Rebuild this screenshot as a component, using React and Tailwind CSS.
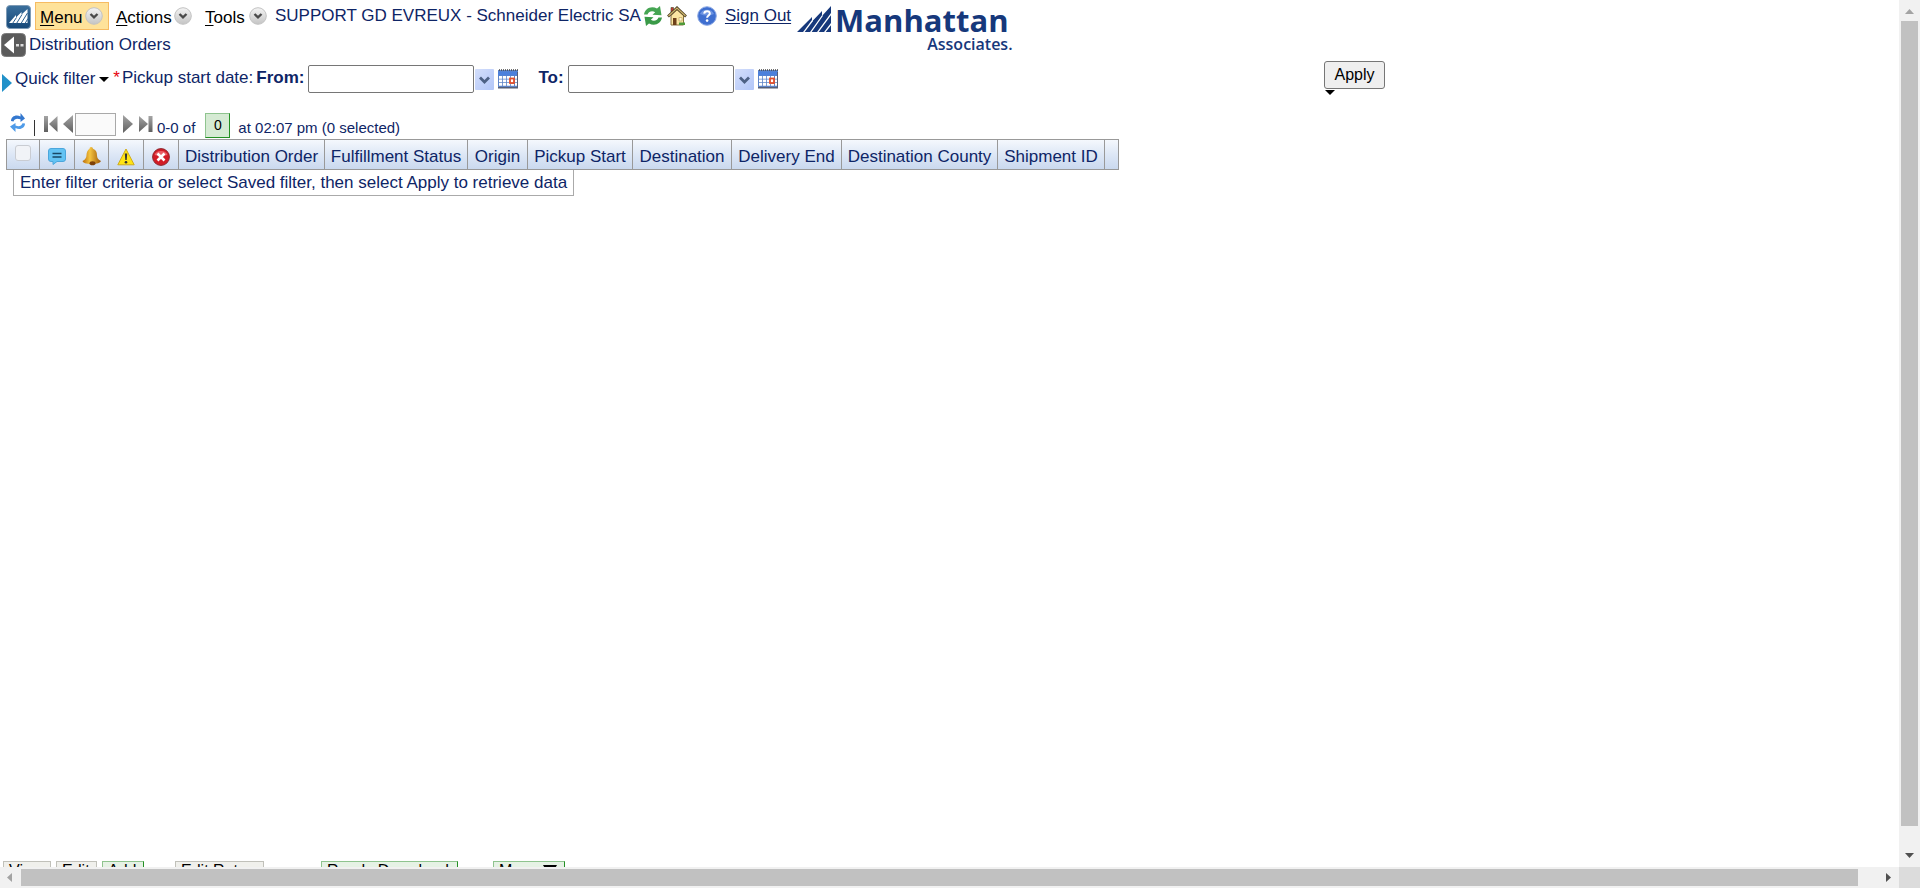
import React from "react";

const MenuChevron = () => (
  <svg width="18" height="18" viewBox="0 0 18 18" aria-hidden="true">
    <defs>
      <linearGradient id="chev" x1="0" y1="0" x2="0" y2="1">
        <stop offset="0" stopColor="#f4f4f4" />
        <stop offset="1" stopColor="#c4c4c4" />
      </linearGradient>
    </defs>
    <circle cx="9" cy="9" r="8.3" fill="url(#chev)" stroke="#c2c2c2" />
    <path d="M5.500 7 9 10.300l3.500-3.300" fill="none" stroke="#4a4a4a" strokeWidth="2.400" />
  </svg>
);

const AppMark = () => (
  <svg width="25" height="24" viewBox="0 0 25 24" aria-hidden="true">
    <defs>
      <linearGradient id="mark" x1="0" y1="0" x2="0" y2="1">
        <stop offset="0" stopColor="#3a6f9c" />
        <stop offset="1" stopColor="#164878" />
      </linearGradient>
    </defs>
    <rect x=".5" y=".5" width="24" height="23" rx="3.500" fill="url(#mark)" stroke="#7d9ab5" />
    <path d="M3 18 10 10v2.500L15.500 7v2.500L21.500 4v14z" fill="#fff" />
    <path d="M6.500 18.500 10.500 12.500M10.500 18.500 16 9.500M15 18.500 21.500 8M19 18.500l3-5" stroke="#2a5f8f" strokeWidth="1" />
  </svg>
);

const BackIcon = () => (
  <svg width="25" height="24" viewBox="0 0 25 24" aria-hidden="true">
    <rect x=".5" y=".5" width="24" height="23" rx="4" fill="#5b5b5b" stroke="#7c7c7c" />
    <path d="M3 12 13 3.500v17z" fill="#fff" />
    <path d="M15 11h3v2.500h-3zM19.500 11h3v2.500h-3z" fill="#ddd" />
  </svg>
);

const RefreshGreen = () => (
  <svg width="20" height="20" viewBox="0 0 20 20" aria-hidden="true">
    <path d="M1 8.500C2 2.500 8-.5 14 2.500L17 0l1.500 9.200-9-.4 2.700-2.600C9.500 4.500 6 5 4.500 8.500z" fill="#45a553" />
    <path d="M19 11.500C18 17.500 12 20.500 6 17.500L3 20l-1.500-9.200 9 .4-2.700 2.600c2.700 1.700 6.200 1.200 7.700-2.300z" fill="#3a9a48" />
  </svg>
);

const HomeIcon = () => (
  <svg width="20" height="20" viewBox="0 0 20 20" aria-hidden="true">
    <path d="M4 1.500h2.500V6H4z" fill="#c33" stroke="#553" strokeWidth=".7" />
    <path d="M4 9.500V19h12.500V9.500L10 4z" fill="#fbe6a2" stroke="#8a7340" />
    <path d="M1 10.500 10 1.800l9 8.700" fill="none" stroke="#4a3b20" strokeWidth="2.600" />
    <path d="M1.500 10 10 2l8.500 8" fill="none" stroke="#cdb56b" strokeWidth="1.200" />
    <path d="M6 12h3.500v7H6z" fill="#6d401a" />
    <path d="M12 11.500h3V15h-3z" fill="#fff4cf" stroke="#b89a55" strokeWidth=".6" />
    <path d="M12 19h6v-2.500h-6z" fill="#4f9a3b" />
  </svg>
);

const HelpIcon = () => (
  <svg width="20" height="20" viewBox="0 0 20 20" aria-hidden="true">
    <circle cx="10" cy="10" r="9.300" fill="#3f6fd0" stroke="#8eaae4" />
    <path d="M3 8a7.300 6 0 0 1 14 0q-7 3-14 0z" fill="#6d94e2" />
    <path d="M7.200 7.600c.2-3.300 5.800-3.200 5.600 0-.1 1.900-2.700 2-2.700 4.200" fill="none" stroke="#fff" strokeWidth="2" />
    <circle cx="10.100" cy="14.600" r="1.300" fill="#fff" />
  </svg>
);

const Bars = () => (
  <svg width="34" height="26" viewBox="0 0 34 26" aria-hidden="true">
    <path d="M0 26 15 11v4.500L25 5v5L34 0v26z" fill="#16387b" />
    <path d="M6.500 26.500 15.500 14.500M13.500 26.500 25.500 9.500M20.500 26.500 34.500 7.500M27.500 26.500l7-9" stroke="#fff" strokeWidth="1.300" />
  </svg>
);

const DropIcon = () => (
  <svg width="19" height="21" viewBox="0 0 19 21" aria-hidden="true">
    <defs>
      <linearGradient id="drop" x1="0" y1="0" x2="1" y2="1">
        <stop offset="0" stopColor="#d3defb" />
        <stop offset="1" stopColor="#b2c6f8" />
      </linearGradient>
    </defs>
    <rect width="19" height="21" rx="1" fill="url(#drop)" />
    <path d="M5 8.500 9.500 13 14 8.500" fill="none" stroke="#4d6185" strokeWidth="2.800" />
  </svg>
);

const CalendarIcon = () => (
  <svg width="20" height="20" viewBox="0 0 20 20" aria-hidden="true">
    <path d="M0 1h20v18H0z" fill="#5d84c8" />
    <path d="M0 2.500h20v4H0z" fill="#4b80dc" />
    <path d="M0 18h20v1.500H0zM19 3h1v16h-1z" fill="#555f78" />
    <path d="M1 1h19" stroke="#444" strokeWidth="1.600" strokeDasharray="1 1" />
    <path d="M1 7h3.200v2.700H1zM5 7h3.200v2.700H5zM9 7h3.200v2.700H9zM13 7h3v2.700h-3zM17 7h2v2.700h-2zM1 10.500h3.200v2.700H1zM5 10.500h3.200v2.700H5zM9 10.500h3.200v2.700H9zM17 10.500h2v2.700h-2zM1 14h3.200v2.700H1zM5 14h3.200v2.700H5zM9 14h3.200v2.700H9zM13 15h3v1.700h-3zM17 14h2v2.700h-2z" fill="#fff" />
    <rect x="12" y="9.500" width="4" height="4.500" fill="#fff" stroke="#e2502c" strokeWidth="1.800" />
  </svg>
);

const BlueRefresh = () => (
  <svg width="16" height="20" viewBox="0 0 16 20" aria-hidden="true">
    <path d="M1 8C1 3.500 6 1 10.500 3.500V0L15 5.500 10.500 9V6.300C7 5 4.500 5.500 3.500 8.500z" fill="#3478cf" />
    <path d="M15 10.500c0 4.500-5 7-9.500 4.500V19L0 13.500 5.500 10v2.600c3.500 1.300 6 .5 7-2.400z" fill="#4f9be8" />
  </svg>
);

const FirstIcon = () => (
  <svg width="14" height="16" viewBox="0 0 14 16" aria-hidden="true">
    <defs>
      <linearGradient id="nav" x1="0" y1="0" x2="0" y2="1">
        <stop offset="0" stopColor="#a5a5a5" />
        <stop offset="1" stopColor="#5f5f5f" />
      </linearGradient>
    </defs>
    <path d="M0 0h4v16H0zM13.500 0v16L5 8z" fill="url(#nav)" />
  </svg>
);
const PrevIcon = () => (
  <svg width="10" height="18" viewBox="0 0 10 18" aria-hidden="true"><path d="M10 0v18L0 9z" fill="url(#nav)" /></svg>
);
const NextIcon = () => (
  <svg width="10" height="18" viewBox="0 0 10 18" aria-hidden="true"><path d="M0 0v18l10-9z" fill="url(#nav)" /></svg>
);
const LastIcon = () => (
  <svg width="14" height="16" viewBox="0 0 14 16" aria-hidden="true"><path d="M9.500 0h4v16h-4zM0 0v16l9-8z" fill="url(#nav)" /></svg>
);

const NoteIcon = () => (
  <svg width="18" height="17" viewBox="0 0 18 17" aria-hidden="true">
    <path d="M3 .5h12q2.500 0 2.500 2.500v8q0 2.500-2.500 2.500H9L5 16.500v-3H3Q.5 13.500.5 11V3Q.5.500 3 .5z" fill="#63c3f3" stroke="#4ba6dc" />
    <path d="M4.500 5.500h9M4.500 9h9" stroke="#184866" strokeWidth="1.500" />
  </svg>
);
const BellIcon = () => (
  <svg width="20" height="19" viewBox="0 0 20 19" aria-hidden="true">
    <defs>
      <linearGradient id="bell" x1="0" y1="0" x2="1" y2="0">
        <stop offset="0" stopColor="#b96d0c" />
        <stop offset=".4" stopColor="#f5c440" />
        <stop offset="1" stopColor="#9c5606" />
      </linearGradient>
    </defs>
    <path d="M9 0q2 0 2 1.700Q15 3 15 8.500q0 3.500 4 5.500-1 3-9.500 3T.5 14q4-2 4-6T7.500 1.700Q7.500 0 9 0z" fill="url(#bell)" />
    <ellipse cx="10.500" cy="16.300" rx="3" ry="2" fill="#7e420a" />
  </svg>
);
const WarnIcon = () => (
  <svg width="18" height="18" viewBox="0 0 18 18" aria-hidden="true">
    <path d="M9 1 17.200 16.800H.8z" fill="#ffe414" stroke="#cfaa1c" strokeLinejoin="round" />
    <path d="M7.800 5.500h2.400L9.700 12H8.300z" fill="#333" />
    <circle cx="9" cy="14.200" r="1.300" fill="#333" />
  </svg>
);
const ErrorIcon = () => (
  <svg width="18" height="18" viewBox="0 0 18 18" aria-hidden="true">
    <circle cx="9" cy="9" r="8.400" fill="#d21c26" stroke="#8e2a30" />
    <path d="M2.500 7a6.800 5.500 0 0 1 13 0q-6.500 2-13 0z" fill="#ea6067" />
    <path d="m5.500 5.500 7 7M12.500 5.500l-7 7" stroke="#fff" strokeWidth="2.600" />
  </svg>
);

const Caret = () => (
  <svg width="10" height="5" viewBox="0 0 10 5" className="block" aria-hidden="true"><path d="M0 0h10L5 5z" fill="#000" /></svg>
);

const MoreArrow = () => (
  <svg width="14" height="12" viewBox="0 0 14 12" className="mt-[3px]" aria-hidden="true"><path d="M0 0h14L7 12z" fill="#000" /></svg>
);

const menus = [
  { key: "M", rest: "enu", style: "border-[#f6bb62] bg-[#fee29a] w-[74px]" },
  { key: "A", rest: "ctions", style: "border-transparent w-[87px] ml-0.5" },
  { key: "T", rest: "ools", style: "border-transparent w-[73px] ml-0.5" },
];

const columns = [
  ["Distribution Order", "w-[146px]"],
  ["Fulfillment Status", "w-[143px]"],
  ["Origin", "w-[60px]"],
  ["Pickup Start", "w-[105px]"],
  ["Destination", "w-[99px]"],
  ["Delivery End", "w-[110px]"],
  ["Destination County", "w-[156px]"],
  ["Shipment ID", "w-[107px]"],
];

const iconColumns = [
  ["Notes", NoteIcon, "w-[35px]"],
  ["Alerts", BellIcon, "w-[34px]"],
  ["Warnings", WarnIcon, "w-[35px]"],
  ["Errors", ErrorIcon, "w-[35px]"],
];

const actions = [
  ["View", "ml-[3px] w-12", false],
  ["Edit", "ml-[5px] w-[41px]", false],
  ["Add", "ml-[5px] w-[42px]", true],
  ["Edit Rates", "ml-[31px] w-[89px]", false],
  ["Ready Download", "ml-[57px] w-[137px]", true],
  ["More", "ml-[35px] w-[72px]", true, MoreArrow],
];

const DateField = ({ id, label, gap }) => (
  <>
    <label htmlFor={id} className={`pb-0.5 font-bold ${gap}`}>{label}</label>
    <input id={id} type="text" className="ml-1 h-7 w-[166px] rounded-[2px] border border-[#767676] bg-white px-1 text-black" />
    <button type="button" aria-label={`${label} date options`} className="ml-px"><DropIcon /></button>
    <button type="button" aria-label={`${label} calendar`} className="ml-1"><CalendarIcon /></button>
  </>
);

const cell = "border-t border-b border-l border-[#999] p-0 align-middle font-normal";

export default function App() {
  return (
    <div className="grid h-screen grid-cols-[minmax(0,1fr)_21px] grid-rows-[minmax(0,1fr)_21px] overflow-hidden bg-white font-['Liberation_Sans',Arial,sans-serif] text-[17px] leading-6 text-[#0e2566]">
      <div className="flex min-h-0 flex-col overflow-hidden whitespace-nowrap">
        <header className="flex h-[33px] items-start">
          <span className="mt-[5px] ml-1.5"><AppMark /></span>
          <nav className="ml-1 mt-0.5 flex">
            {menus.map((m) => (
              <button key={m.key} type="button" className={`flex h-7 items-center justify-between border pr-[5px] pl-1 text-black ${m.style}`}>
                <span className="pt-1"><u className="underline-offset-2">{m.key}</u>{m.rest}</span>
                <MenuChevron />
              </button>
            ))}
          </nav>
          <div className="ml-0.5 flex h-[31px] items-center">
            <span>SUPPORT GD EVREUX - Schneider Electric SA</span>
            <button type="button" aria-label="Refresh" className="ml-0.5"><RefreshGreen /></button>
            <button type="button" aria-label="Home" className="ml-1"><HomeIcon /></button>
            <button type="button" aria-label="Help" className="ml-2.5"><HelpIcon /></button>
            <a href="#signout" className="ml-2 underline underline-offset-2">Sign Out</a>
          </div>
          <div className="ml-1.5 flex items-start pt-1.5 text-[#16387b]">
            <Bars />
            <div className="ml-1 flex flex-col items-end font-['Open_Sans',sans-serif]">
              <span className="pr-1 text-[31px] leading-7 font-bold">Manhattan</span>
              <span className="text-base leading-5 font-semibold">Associates.</span>
            </div>
          </div>
        </header>

        <div className="flex h-6 items-center">
          <button type="button" aria-label="Back" className="ml-px"><BackIcon /></button>
          <h1 className="ml-[3px]">Distribution Orders</h1>
        </div>

        <form className="mt-1 flex items-start" onSubmit={(e) => e.preventDefault()}>
          <div className="mt-1 flex w-[1324px] items-center">
            <svg width="10" height="18" viewBox="0 0 10 18" className="mt-2 ml-0.5" aria-hidden="true"><path d="M0 0v18l10-9z" fill="#2191c9" /></svg>
            <button type="button" className="ml-[3px] flex items-center gap-1">Quick filter <Caret /></button>
            <span className="ml-1 pb-0.5 text-red-600">*</span>
            <span className="ml-0.5 pb-0.5">Pickup start date:</span>
            <DateField id="from" label="From:" gap="ml-[3px]" />
            <DateField id="to" label="To:" gap="ml-5" />
          </div>
          <div>
            <button type="submit" className="block h-7 w-[61px] rounded-[3px] border border-[#767676] bg-[#efefef] text-base text-black">Apply</button>
            <button type="button" aria-label="More apply options" className="mt-px ml-px block"><Caret /></button>
          </div>
        </form>

        <div className="mt-[17px] flex h-[26px] items-center text-[15px]">
          <button type="button" aria-label="Reload list" className="mb-1 ml-2.5"><BlueRefresh /></button>
          <span className="mt-1.5 ml-2 h-4 w-px bg-[#333]" />
          <button type="button" aria-label="First page" className="mb-0.5 ml-[9px]"><FirstIcon /></button>
          <button type="button" aria-label="Previous page" className="mb-0.5 ml-[5px]"><PrevIcon /></button>
          <input aria-label="Page" type="text" className="mb-0.5 ml-0.5 h-[23px] w-[41px] border border-[#a9a9a9] bg-[#fafafa] px-1" />
          <button type="button" aria-label="Next page" className="mb-0.5 ml-[7px]"><NextIcon /></button>
          <button type="button" aria-label="Last page" className="mb-0.5 ml-1.5"><LastIcon /></button>
          <span className="mt-1.5 ml-1">0-0 of</span>
          <button type="button" className="ml-2.5 h-[25px] w-[25px] border border-[#8fc48f] border-r-[#239023] border-b-[#239023] bg-[#d5ead3] text-sm leading-5 text-black">0</button>
          <span className="mt-1.5 ml-2">at 02:07 pm (0 selected)</span>
        </div>

        <table className="mt-px ml-1.5 h-[31px] w-[1113px] table-fixed border-separate border-spacing-0 bg-linear-to-b from-[#f6f9fd] via-[#dde7f6] to-[#c9d8ee]">
          <thead>
            <tr className="h-[31px]">
              <th className={`w-[33px] ${cell}`}>
                <input type="checkbox" disabled aria-label="Select all" className="mx-auto mb-1 block size-4 appearance-none rounded-[3px] border border-[#c9ccd2] bg-[#f1f3f7]" />
              </th>
              {iconColumns.map(([name, Icon, w]) => (
                <th key={name} aria-label={name} className={`${w} ${cell}`}>
                  <span className="flex justify-center pt-1"><Icon /></span>
                </th>
              ))}
              {columns.map(([name, w]) => (
                <th key={name} className={`${w} ${cell} pt-1 text-center`}>{name}</th>
              ))}
              <th aria-label="Spacer" className={`w-[15px] border-r ${cell}`} />
            </tr>
          </thead>
        </table>
        <p className="ml-[13px] w-fit border-r border-b border-l border-[#aaa] px-1.5 leading-[25px]">
          Enter filter criteria or select Saved filter, then select Apply to retrieve data
        </p>

        <footer className="mt-auto flex h-1.5 shrink-0 items-start overflow-hidden text-base">
          {actions.map(([label, place, enabled, Icon]) => (
            <button
              key={label}
              type="button"
              className={`flex h-5 shrink-0 items-start gap-2 border pl-[5px] text-left leading-[18px] text-black ${place} ${enabled ? "border-[#8fc48f] border-r-[#239023] bg-[#e6f2e5]" : "border-[#c1c1ba] bg-[#f0f0ec]"}`}
            >
              {label}
              {Icon && <Icon />}
            </button>
          ))}
        </footer>
      </div>

      <div className="flex flex-col items-center bg-[#f1f1f1]">
        <svg width="21" height="21" viewBox="0 0 21 21" className="shrink-0" aria-hidden="true"><path d="M6 14h9l-4.500-5z" fill="#a3a3a3" /></svg>
        <div className="w-[17px] flex-1 bg-[#c1c1c1]" />
        <div className="flex h-[41px] items-end">
          <svg width="21" height="21" viewBox="0 0 21 21" aria-hidden="true"><path d="M6 7h9l-4.500 5z" fill="#505050" /></svg>
        </div>
      </div>
      <div className="flex items-center bg-[#f1f1f1]">
        <svg width="21" height="21" viewBox="0 0 21 21" className="shrink-0" aria-hidden="true"><path d="M12 6v9l-5-4.500z" fill="#a3a3a3" /></svg>
        <div className="h-[17px] flex-1 bg-[#c1c1c1]" />
        <div className="flex w-[41px] justify-end">
          <svg width="21" height="21" viewBox="0 0 21 21" aria-hidden="true"><path d="M8 6v9l5-4.500z" fill="#505050" /></svg>
        </div>
      </div>
      <div className="bg-[#dcdcdc]" />
    </div>
  );
}
